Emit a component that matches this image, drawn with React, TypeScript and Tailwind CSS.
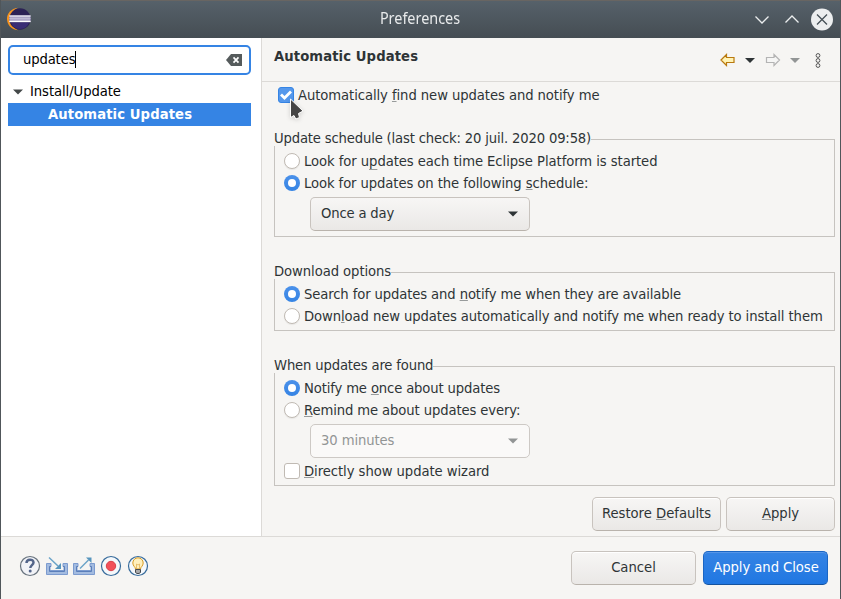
import type { ReactNode } from "react";

function Radio({ on = false }: { on?: boolean }) {
  return on ? (
    <span className="flex size-4 shrink-0 items-center justify-center rounded-full bg-linear-to-b from-[#4b91ea] to-[#3584e4]">
      <span className="size-2 rounded-full bg-white" />
    </span>
  ) : (
    <span className="size-4 shrink-0 rounded-full border border-[#c0bab3] bg-white shadow-[0_1px_1px_rgba(0,0,0,0.06)]" />
  );
}

function Key({ children, low = false }: { children: ReactNode; low?: boolean }) {
  return (
    <span className={`underline decoration-[#989b9b] decoration-1 [text-decoration-skip-ink:none] ${low ? "underline-offset-3" : "underline-offset-1"}`}>
      {children}
    </span>
  );
}

function Row({ control, spacing, children }: { control: ReactNode; spacing: string; children: ReactNode }) {
  return (
    <label className="flex h-[22px] items-center gap-1 whitespace-nowrap">
      {control}
      <span className={spacing}>{children}</span>
    </label>
  );
}

function Group({ title, box, spacing, children }: { title: string; box: string; spacing: string; children: ReactNode }) {
  return (
    <section className={`flex flex-col items-start border border-[#c6c3bf] ${box}`}>
      <h2 className={`-mt-[10px] -ml-px h-4 shrink-0 bg-[#f6f5f3] leading-4 ${spacing}`}>{title}</h2>
      <div className="flex flex-col pt-1 pl-[9px]">{children}</div>
    </section>
  );
}

function Select({ label, disabled = false }: { label: string; disabled?: boolean }) {
  return (
    <div
      className={`ml-[26px] flex h-[34px] w-[220px] items-center justify-between rounded-[5px] border pr-[11px] pb-0.5 pl-2.5 ${
        disabled ? "border-[#cdc9c5] bg-[#faf9f8] tracking-[-0.1px] text-[#929595]" : "border-[#c8c3be] border-b-[#b9b3ac] bg-linear-to-b from-[#f7f6f5] to-[#eae8e6] tracking-[-0.18px]"
      }`}
    >
      <span>{label}</span>
      <svg className="mt-0.5" width="11" height="6" viewBox="0 0 11 6" fill="currentColor">
        <path d="M1 .5h10L6 5.500z" />
      </svg>
    </div>
  );
}

function Button({ children, className }: { children: ReactNode; className: string }) {
  return (
    <button className={`flex h-[34px] items-center justify-center rounded-[5px] border pb-0.5 ${className}`}>
      <span>{children}</span>
    </button>
  );
}

const plain = "border-[#c8c3be] border-b-[#b9b3ac] bg-linear-to-b from-[#f7f6f5] to-[#eae8e6] shadow-[inset_0_1px_#fff]";

function Logo() {
  return (
    <svg className="-mt-0.5" width="26" height="24" viewBox="0 0 26 24">
      <path d="M12 .8C5 1.4.9 6.6 1 12s4 10.600 11 11.200C7.500 21 4.500 17 4.500 12S7.500 3 12 .8z" fill="#f7941e" />
      <circle cx="14" cy="12" r="10.700" fill="#2c2255" />
      <path d="M5 15.500h18a9.500 9.500 0 0 1-18 0z" fill="#3a2d75" />
      <path d="M3.300 8.400h21.300v6.900H3.300z" fill="#aaa3c5" />
      <path d="M3.300 9h21.300M3.300 14.400h21.300" stroke="#fff" strokeWidth="1.100" />
      <path d="M3.300 11.700h21.300" stroke="#c5c0d8" strokeWidth="1" />
    </svg>
  );
}

function TrayIcon({ out = false }: { out?: boolean }) {
  return (
    <svg width="22" height="20" viewBox="0 0 22 20" fill="none">
      <path d="M.5 7.500h4.500v3H4v4h14v-4h-1v-3h4.500v11H.5z" fill="#a3bbe0" stroke="#7c9bcf" />
      <path d="M5 10.500H3.500v5h15v-5H17" stroke="#5b7fba" />
      {out ? (
        <>
          <path d="m7 12.500 8.500-8.500" stroke="#6aa3c8" strokeWidth="1.500" />
          <path d="M13 1.500h5.500V7z" fill="#5795bd" />
        </>
      ) : (
        <>
          <path d="m3 1.500 9 8.500" stroke="#6aa3c8" strokeWidth="1.500" />
          <path d="M15 7v6H9z" fill="#5795bd" />
        </>
      )}
    </svg>
  );
}

export default function App() {
  return (
    <div className="relative flex h-[599px] w-[841px] flex-col overflow-hidden bg-[#f6f5f3] font-['DejaVu_Sans_Condensed','DejaVu_Sans',sans-serif] text-[14.67px] leading-5 text-[#2e3436] [font-stretch:condensed]">
      <header className="flex h-[38px] shrink-0 items-center border-t border-[#686562] bg-linear-to-b from-[#56616a] to-[#454d53] pr-[7px] pl-[6px]">
        <Logo />
        <h1 className="flex-1 scale-x-90 pb-1 pl-[60px] text-center font-['Noto_Sans',sans-serif] text-base text-[#e8eaeb] [font-stretch:normal]">Preferences</h1>
        <svg className="-mt-0.5" width="80" height="24" viewBox="0 0 80 24" fill="none" stroke="#eceeef" strokeWidth="1.300">
          <path d="m1.500 9.500 6.500 6.500L14.500 9.500M31.500 15.500l6.500-6.500 6.500 6.500" />
          <circle cx="68" cy="12.500" r="11" fill="#eceeef" stroke="none" />
          <path d="m63 7.500 10 10M73 7.500 63 17.500" stroke="#465057" strokeWidth="1.300" />
        </svg>
      </header>

      <div className="flex h-[498px] shrink-0">
        <aside className="w-[262px] border-r border-[#dcdad7] bg-white pt-[7px] pl-2 text-black">
          <div className="flex h-[30px] w-[243px] items-center justify-between rounded-[5px] border-2 border-[#3584e4] pr-[7px] pl-[13px]">
            <span className="flex items-center pb-0.5 tracking-[-0.14px]">
              <span>updates</span>
              <span className="h-[17px] w-px bg-black" />
            </span>
            <svg width="16" height="12" viewBox="0 0 16 12">
              <path d="M5 0h11v12H5L0 6z" fill="#555b5c" />
              <path d="m7.500 3.400 5 5.200m0-5.200-5 5.200" stroke="#fff" strokeWidth="1.700" />
            </svg>
          </div>
          <div className="flex h-7 items-center gap-[7px] pt-1 pl-[5px]">
            <svg className="mt-0.5" width="10" height="6" viewBox="0 0 10 6"><path d="M0 .5h10L5 5.500z" fill="#444849" /></svg>
            <span className="tracking-[-0.07px]">Install/Update</span>
          </div>
          <div className="flex h-[23px] w-[243px] items-center bg-[#3584e4] pb-0.5 pl-10 font-bold tracking-[0.1px] text-white">
            <span>Automatic Updates</span>
          </div>
        </aside>

        <main className="flex w-[579px] flex-col">
          <div className="flex h-11 shrink-0 justify-between border-b border-[#dcdad7] pr-5 pl-3">
            <h2 className="pt-2 font-bold tracking-[0.1px]">Automatic Updates</h2>
            <svg className="mt-3.5" width="102" height="18" viewBox="0 0 102 18" fill="none">
              <path d="m2 8 5.500-5.500V5.500H15v5H7.500v3z" fill="#fff3b5" stroke="#b9790e" strokeWidth="1.200" />
              <path d="M26 6h10l-5 5z" fill="#2e3436" />
              <path d="m60.500 8-5.500-5.500V5.500H47.500v5H55v3z" fill="#f6f6f5" stroke="#b4b4b4" strokeWidth="1.200" />
              <path d="M71 6h10l-5 5z" fill="#929595" />
              <g stroke="#555" strokeWidth="1"><circle cx="99" cy="3.500" r="1.900" /><circle cx="99" cy="8.500" r="1.900" /><circle cx="99" cy="13.500" r="1.900" /></g>
            </svg>
          </div>
          <label className="flex h-[26px] shrink-0 items-center gap-1 pl-4">
            <span className="flex size-4 items-center justify-center rounded-[3px] border border-[#3584e4] bg-[#5598ec]">
              <svg className="shrink-0" width="14" height="12" viewBox="0 0 14 12"><path d="m2 5.500 3.500 3.500L12 2.500" fill="none" stroke="#fff" strokeWidth="2.800" /></svg>
            </span>
            <span className="tracking-[-0.075px]">Automatically <Key>f</Key>ind new updates and notify me</span>
          </label>
          <div className="flex flex-col pt-[31px] pl-3">
            <Group title="Update schedule (last check: 20 juil. 2020 09:58)" box="h-[98px] w-[561px]" spacing="tracking-[-0.165px]">
              <Row control={<Radio />} spacing="tracking-[-0.065px]">Look for u<Key low>p</Key>dates each time Eclipse Platform is started</Row>
              <Row control={<Radio on />} spacing="tracking-[-0.09px]">Look for updates on the following <Key>s</Key>chedule:</Row>
              <div className="pt-[3px]"><Select label="Once a day" /></div>
            </Group>
            <Group title="Download options" box="mt-[35px] h-[59px] w-[561px]" spacing="tracking-[-0.07px]">
              <Row control={<Radio on />} spacing="tracking-[-0.115px]">Search for updates and <Key>n</Key>otify me when they are available</Row>
              <Row control={<Radio />} spacing="tracking-[-0.092px]">Down<Key>l</Key>oad new updates automatically and notify me when ready to install them</Row>
            </Group>
            <Group title="When updates are found" box="mt-[35px] h-[120px] w-[561px]" spacing="tracking-[-0.16px]">
              <Row control={<Radio on />} spacing="tracking-[-0.14px]">Notify me <Key>o</Key>nce about updates</Row>
              <Row control={<Radio />} spacing="tracking-[-0.11px]"><Key>R</Key>emind me about updates every:</Row>
              <div className="pt-[3px]"><Select label="30 minutes" disabled /></div>
              <div className="pt-0.5">
                <Row control={<span className="size-4 rounded-[3px] border border-[#c0bab3] bg-white" />} spacing="tracking-[-0.06px]"><Key>D</Key>irectly show update wizard</Row>
              </div>
            </Group>
          </div>
          <div className="flex justify-end gap-[5px] pt-[11px] pr-1.5">
            <Button className={`w-[129px] ${plain}`}>Restore <Key>D</Key>efaults</Button>
            <Button className={`w-[109px] ${plain}`}><Key>A</Key>pply</Button>
          </div>
        </main>
      </div>

      <footer className="flex h-[63px] justify-between border-t border-[#dcdad7] pt-[14px] pr-[13px] pl-[19px]">
        <div className="flex h-[30px] items-center gap-[5px]">
          <svg width="22" height="22" viewBox="0 0 22 22">
            <circle cx="11" cy="11" r="9.500" fill="#f2f3f7" stroke="#68737e" strokeWidth="1.200" />
            <path d="M7.500 8c.1-4.500 7-4.300 7-.5 0 2.500-3.200 2.700-3.200 5.500" fill="none" stroke="#53658a" strokeWidth="2.500" />
            <circle cx="11.200" cy="16" r="1.500" fill="#53658a" />
          </svg>
          <TrayIcon />
          <TrayIcon out />
          <svg width="22" height="22" viewBox="0 0 22 22">
            <circle cx="11" cy="11" r="9.500" fill="#f5f8fb" stroke="#376b9b" strokeWidth="1.200" />
            <circle cx="11" cy="11" r="4.700" fill="#f2505a" stroke="#d8404a" />
          </svg>
          <svg width="22" height="22" viewBox="0 0 22 22">
            <circle cx="11" cy="11" r="9.500" fill="#f5f8fb" stroke="#376b9b" strokeWidth="1.200" />
            <path d="M8.500 14c0-2-2.700-3-2.700-6a5.200 5.200 0 0 1 10.400 0c0 3-2.700 4-2.700 6z" fill="#fff0bd" stroke="#d99c24" />
            <path d="M9.500 14V9l1.500 1 1.500-1v5" fill="none" stroke="#e2b45a" strokeWidth=".8" />
            <path d="M8.500 14.500h5v3l-1.500 1h-2l-1.500-1z" fill="#aaa" stroke="#45484c" />
          </svg>
        </div>
        <div className="flex gap-[7px]">
          <Button className={`w-[125px] ${plain}`}>Cancel</Button>
          <Button className="w-[125px] border-[#1b66c4] border-b-[#15539e] bg-linear-to-b from-[#3584e4] to-[#2077e2] pl-px tracking-[-0.06px] text-white shadow-[inset_0_1px_#5796e8]">Apply and Close</Button>
        </div>
      </footer>

      <div className="pointer-events-none absolute inset-y-0 left-0 w-px bg-[#50565a]" />
      <div className="pointer-events-none absolute inset-y-0 right-0 w-px bg-[#50565a]" />
      <svg className="absolute top-[97px] left-[288px] drop-shadow-sm" width="16" height="24" viewBox="0 0 16 24">
        <path d="M2.500 2v18.500l3.500-2 1.800 3.500 3.700-1.500-1-4L15 14z" fill="#464646" stroke="#fff" strokeWidth="1" />
      </svg>
    </div>
  );
}
